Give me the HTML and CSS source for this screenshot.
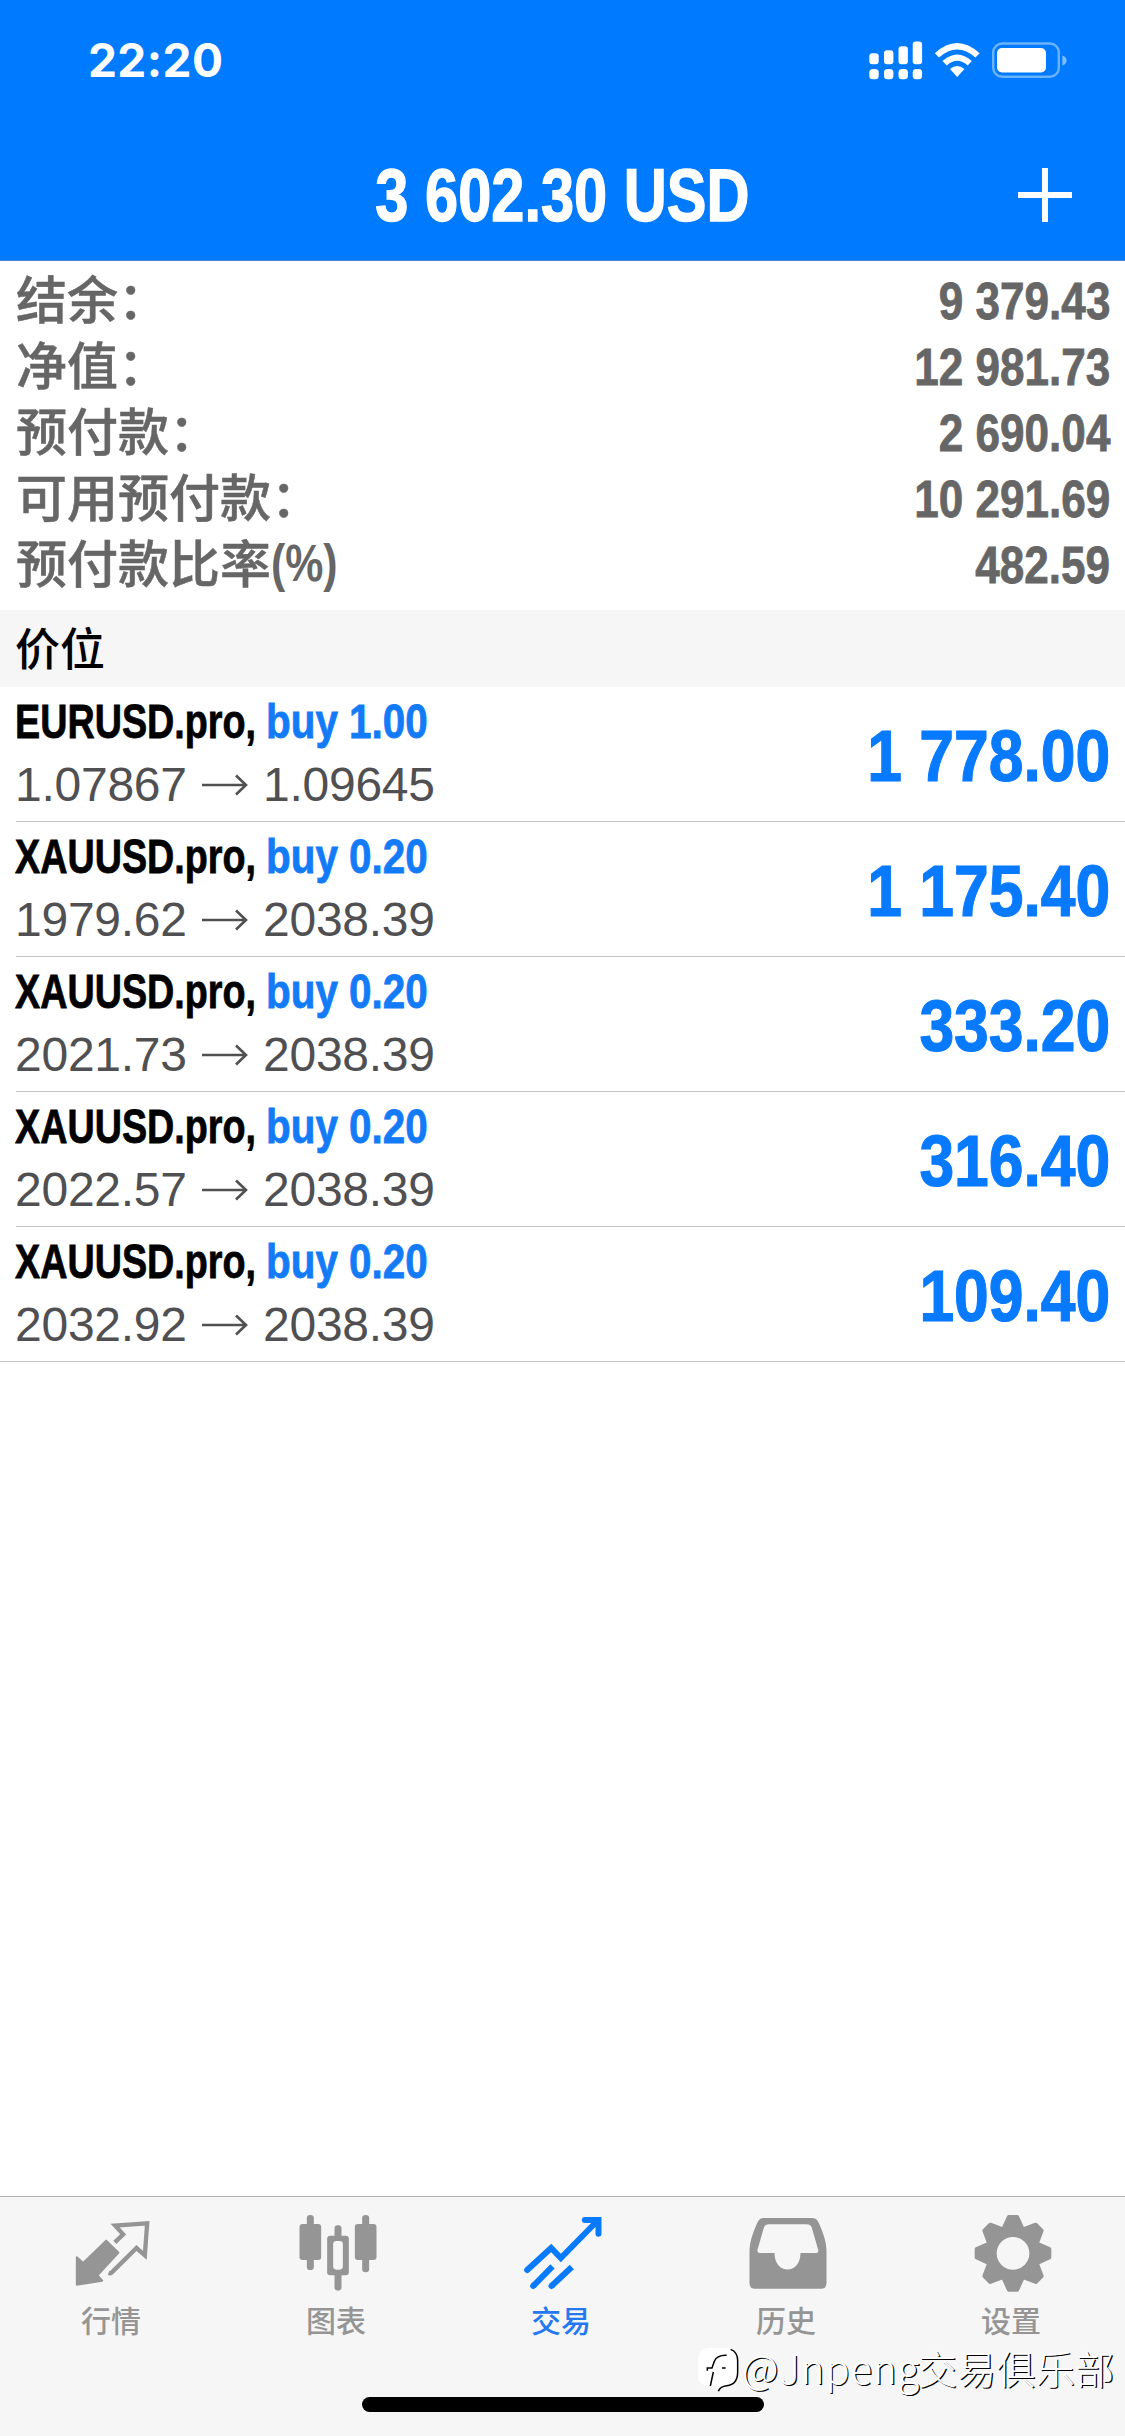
FILE: index.html
```html
<!DOCTYPE html>
<html lang="zh-CN">
<head>
<meta charset="utf-8">
<title>交易</title>
<link rel="stylesheet" href="styles.css">
</head>
<body>
<div class="app">
  <header class="header">
    <div class="status">
      <span class="time">22:20</span>
      <svg class="status-icons" viewBox="869 41 198 39" fill="#fff">
        <rect x="869.3" y="53.3" width="9.4" height="11" rx="3"/><rect x="884" y="50.3" width="9.4" height="14" rx="3"/><rect x="898.5" y="46.3" width="9.4" height="18" rx="3"/><rect x="912.7" y="41.6" width="9.4" height="22.7" rx="3"/>
        <rect x="869.3" y="69" width="9.4" height="10.2" rx="3.5"/><rect x="884" y="69" width="9.4" height="10.2" rx="3.5"/><rect x="898.5" y="69" width="9.4" height="10.2" rx="3.5"/><rect x="912.7" y="69" width="9.4" height="10.2" rx="3.5"/>
        <path d="M934.8 53.2Q957.2 32.8 979.6 53.2L975.4 57.6Q957.2 41.6 939 57.6Z"/>
        <path d="M942.5 61Q957.2 48 971.9 61L967.6 65.4Q957.2 56.2 946.8 65.4Z"/>
        <path d="M950 68.9Q957.2 63 964.4 68.9L957.2 77Z"/>
        <rect x="993.2" y="43.5" width="65.6" height="33.2" rx="9" fill="none" stroke="#fff" stroke-width="2.4" opacity=".42"/>
        <rect x="997" y="48" width="49" height="24.4" rx="5"/>
        <path d="M1062.4 55.5Q1066.6 57 1066.6 60.5T1062.4 65.5Z" opacity=".5"/>
      </svg>
    </div>
    <div class="nav">
      <h1 class="title"><span class="fit">3 602.30 USD</span></h1>
      <svg class="plus" viewBox="0 0 54 54" stroke="#fff" stroke-width="6"><path d="M27 0V54M0 27H54"/></svg>
    </div>
  </header>

  <dl class="summary">
    <div class="line"><dt>结余：</dt><dd>9 379.43</dd></div>
    <div class="line"><dt>净值：</dt><dd>12 981.73</dd></div>
    <div class="line"><dt>预付款：</dt><dd>2 690.04</dd></div>
    <div class="line"><dt>可用预付款：</dt><dd>10 291.69</dd></div>
    <div class="line"><dt>预付款比率<span class="pct">(%)</span></dt><dd>482.59</dd></div>
  </dl>

  <h2 class="section">价位</h2>

  <ul class="positions">
    <li class="row">
      <div class="deal"><span class="symbol">EURUSD.pro,</span><span class="side">buy 1.00</span></div>
      <div class="prices"><span class="price">1.07867</span><svg class="arrow" viewBox="0 0 46 22"><path d="M0 11H44M34 1.5L44 11L34 20.5"/></svg><span>1.09645</span></div>
      <div class="profit">1 778.00</div>
    </li>
    <li class="row">
      <div class="deal"><span class="symbol">XAUUSD.pro,</span><span class="side">buy 0.20</span></div>
      <div class="prices"><span class="price">1979.62</span><svg class="arrow" viewBox="0 0 46 22"><path d="M0 11H44M34 1.5L44 11L34 20.5"/></svg><span>2038.39</span></div>
      <div class="profit">1 175.40</div>
    </li>
    <li class="row">
      <div class="deal"><span class="symbol">XAUUSD.pro,</span><span class="side">buy 0.20</span></div>
      <div class="prices"><span class="price">2021.73</span><svg class="arrow" viewBox="0 0 46 22"><path d="M0 11H44M34 1.5L44 11L34 20.5"/></svg><span>2038.39</span></div>
      <div class="profit">333.20</div>
    </li>
    <li class="row">
      <div class="deal"><span class="symbol">XAUUSD.pro,</span><span class="side">buy 0.20</span></div>
      <div class="prices"><span class="price">2022.57</span><svg class="arrow" viewBox="0 0 46 22"><path d="M0 11H44M34 1.5L44 11L34 20.5"/></svg><span>2038.39</span></div>
      <div class="profit">316.40</div>
    </li>
    <li class="row">
      <div class="deal"><span class="symbol">XAUUSD.pro,</span><span class="side">buy 0.20</span></div>
      <div class="prices"><span class="price">2032.92</span><svg class="arrow" viewBox="0 0 46 22"><path d="M0 11H44M34 1.5L44 11L34 20.5"/></svg><span>2038.39</span></div>
      <div class="profit">109.40</div>
    </li>
  </ul>

  <nav class="tabs">
    <a class="tab">
      <svg class="icon" viewBox="211.5 96 252 252" fill="#959595" stroke="#959595" stroke-linejoin="round">
        <path stroke-width="6" d="M317 182L354 218L291 286L305 302L229 314V232L248 249Z"/>
        <path fill="none" stroke-linejoin="miter" stroke-width="13" d="M343 187L368 163L344 137L440 130L433 226L408 204L334 277Q330 281 324 279"/>
      </svg>
      <span>行情</span>
    </a>
    <a class="tab">
      <svg class="icon" viewBox="886.5 96 252 252" fill="#959595">
        <rect x="919" y="105" width="21" height="165" rx="10"/><rect x="897" y="132" width="65" height="108" rx="9"/>
        <rect x="1085" y="105" width="21" height="172" rx="10"/><rect x="1063" y="132" width="65" height="108" rx="9"/>
        <rect x="1002" y="136" width="21" height="196" rx="10"/><rect x="980" y="167" width="65" height="119" rx="9"/>
        <rect x="998" y="183" width="29" height="86" rx="10" fill="#f6f6f6"/>
      </svg>
      <span>图表</span>
    </a>
    <a class="tab active">
      <svg class="icon" viewBox="301.5 96 252 252" fill="none" stroke="#087aff" stroke-width="18" stroke-linecap="round">
        <path d="M320 270L392 204L421 234L530 123M493 120H534V161"/>
        <path stroke-linecap="butt" d="M338 318L396 259M393 318L454 261"/>
        <path d="M338 318L340 316M393 318L395 316"/>
      </svg>
      <span>交易</span>
    </a>
    <a class="tab">
      <svg class="icon" viewBox="196.5 96 252 252" fill="#959595">
        <path fill-rule="evenodd" d="M250 114H394Q408 114 414 127Q438 180 438 210V310Q438 326 422 326H223Q207 326 207 310V210Q207 180 231 127Q237 114 250 114ZM266 133Q254 133 250 143L231 209Q229 219 238 219H282C282 285 360 285 360 219H405Q415 219 413 209L394 143Q390 133 378 133Z"/>
      </svg>
      <span>历史</span>
    </a>
    <a class="tab">
      <svg class="icon" viewBox="871.5 96 252 252" fill="#959595">
        <g stroke="#959595" stroke-width="12" stroke-linejoin="round">
          <path id="tooth" d="M985 111H1010L1024 142V170H971V142Z"/>
          <use href="#tooth" transform="rotate(45 997.5 220)"/><use href="#tooth" transform="rotate(90 997.5 220)"/><use href="#tooth" transform="rotate(135 997.5 220)"/><use href="#tooth" transform="rotate(180 997.5 220)"/><use href="#tooth" transform="rotate(225 997.5 220)"/><use href="#tooth" transform="rotate(270 997.5 220)"/><use href="#tooth" transform="rotate(315 997.5 220)"/>
        </g>
        <circle cx="997.5" cy="220" r="66" fill="none" stroke="#959595" stroke-width="36"/>
        <circle cx="997.5" cy="220" r="49" fill="#f6f6f6"/>
      </svg>
      <span>设置</span>
    </a>
    <div class="home"></div>
    <div class="credit">
      <svg class="credit-logo" viewBox="22 38 120 132">
        <rect x="22" y="38" width="118" height="114" rx="30" fill="#fff"/>
        <path d="M120 42Q141 50 141 76V110Q141 148 108 151Q88 153 83 168M50 106V98H64L71 78Q78 59 108 60M68 110L59 152M94 98H105" fill="none" stroke="#000" stroke-width="4.5"/>
      </svg>
      <span class="credit-name">@Jnpeng</span><span class="credit-club">交易俱乐部</span>
    </div>
  </nav>
</div>
</body>
</html>
```
FILE: styles.css
```css
* { box-sizing: border-box; margin: 0; padding: 0; }

body {
  width: 1125px;
  background: #fff;
  font-family: "Liberation Sans", "Noto Sans CJK SC", sans-serif;
}

svg { display: block; overflow: visible; }

.app { display: flex; flex-direction: column; height: 2436px; overflow: hidden; }

/* header */
.header { height: 261px; background: #007aff; color: #fff; border-bottom: 1px solid #4b86d8; }
.status { display: flex; justify-content: space-between; height: 121px; padding: 0 58px 0 88px; }
.time { font: 700 46px/121px Inter, sans-serif; letter-spacing: .4px; }
.status-icons { width: 198px; height: 39px; margin-top: 41px; }
.nav { display: grid; grid-template-columns: 1fr auto 1fr; align-items: center; height: 139px; padding: 5px 53px 0; }
.title { grid-column: 2; font-size: 74px; line-height: 140px; white-space: nowrap; width: 376px; display: flex; justify-content: center; }
.fit { transform: scaleX(.805); -webkit-text-stroke: 1.4px; }
.plus { width: 54px; height: 54px; justify-self: end; margin-top: -2px; }

/* account summary */
.summary { height: 349px; padding: 7px 15px 0 16px; color: #666; }
.line { display: flex; justify-content: space-between; height: 66px; line-height: 66px; }
.line dt { font: 500 51px/58px "Noto Sans CJK SC", sans-serif; white-space: nowrap; -webkit-text-stroke: .5px; }
.line dd { font-size: 52px; font-weight: 700; line-height: 66px; transform: scaleX(.848); transform-origin: right; -webkit-text-stroke: .8px; }
.pct { display: inline-block; font: 700 51px/58px "Liberation Sans", sans-serif; transform: translateY(-2px) scaleX(.84); transform-origin: left; -webkit-text-stroke: 0; }

.section { height: 77px; padding-left: 15px; background: #f6f6f6; color: #000; font: 500 45px/73px "Noto Sans CJK SC", sans-serif; }

/* open positions */
.positions { flex: 1; list-style: none; }
.row {
  display: grid;
  grid-template: 64px 70px / 1fr auto;
  height: 135px;
  margin-left: 16px;
  padding-right: 15px;
  border-bottom: 1px solid #c4c4c6;
}
.row:last-child { margin-left: 0; padding-left: 16px; }
.deal { display: flex; height: 64px; font-size: 49px; font-weight: 700; line-height: 68px; white-space: nowrap; -webkit-text-stroke: .8px; }
.symbol { width: 250px; color: #000; transform: translateX(-1px) scaleX(.77); transform-origin: left; }
.side { color: #147bf8; transform: scaleX(.825); transform-origin: left; }
.prices { grid-row: 2; display: flex; align-items: center; height: 68px; color: #505052; font-size: 48px; line-height: 68px; letter-spacing: -.25px; }
.price { width: 186px; text-indent: -1px; }
.arrow { width: 46px; height: 22px; margin-right: 15px; fill: none; stroke: #505052; stroke-width: 2.6; }
.profit { grid-area: 1 / 2 / 3 / 3; color: #087aff; font-size: 73px; font-weight: 700; line-height: 138px; transform: scaleX(.855); transform-origin: right; -webkit-text-stroke: 1.2px; }

/* tab bar */
.tabs { position: relative; display: grid; grid-template-columns: repeat(5, 1fr); height: 240px; border-top: 1px solid #b2b2b2; background: #f6f6f6; }
.tab { display: flex; flex-direction: column; align-items: center; padding-top: 15px; color: #959595; font: 500 30px/40px "Noto Sans CJK SC", sans-serif; }
.tab span { padding-right: 3px; }
.active { color: #2478f0; }
.icon { width: 84px; height: 84px; margin-bottom: 3px; }
.home { position: absolute; left: 362px; bottom: 24px; width: 402px; height: 15px; border-radius: 8px; background: #000; }
.credit {
  position: absolute;
  left: 698px;
  top: 145px;
  display: flex;
  align-items: center;
  color: #fff;
  font: 300 39px/48px "Noto Sans CJK SC", sans-serif;
  text-shadow: 1.2px 1.2px .6px #000;
  white-space: nowrap;
}
.credit-logo { width: 40px; height: 44px; margin: 6px 4px 0 0; }
.credit-name { width: 176px; font-size: 40px; letter-spacing: .9px; }
.credit-club { letter-spacing: .3px; }
```
